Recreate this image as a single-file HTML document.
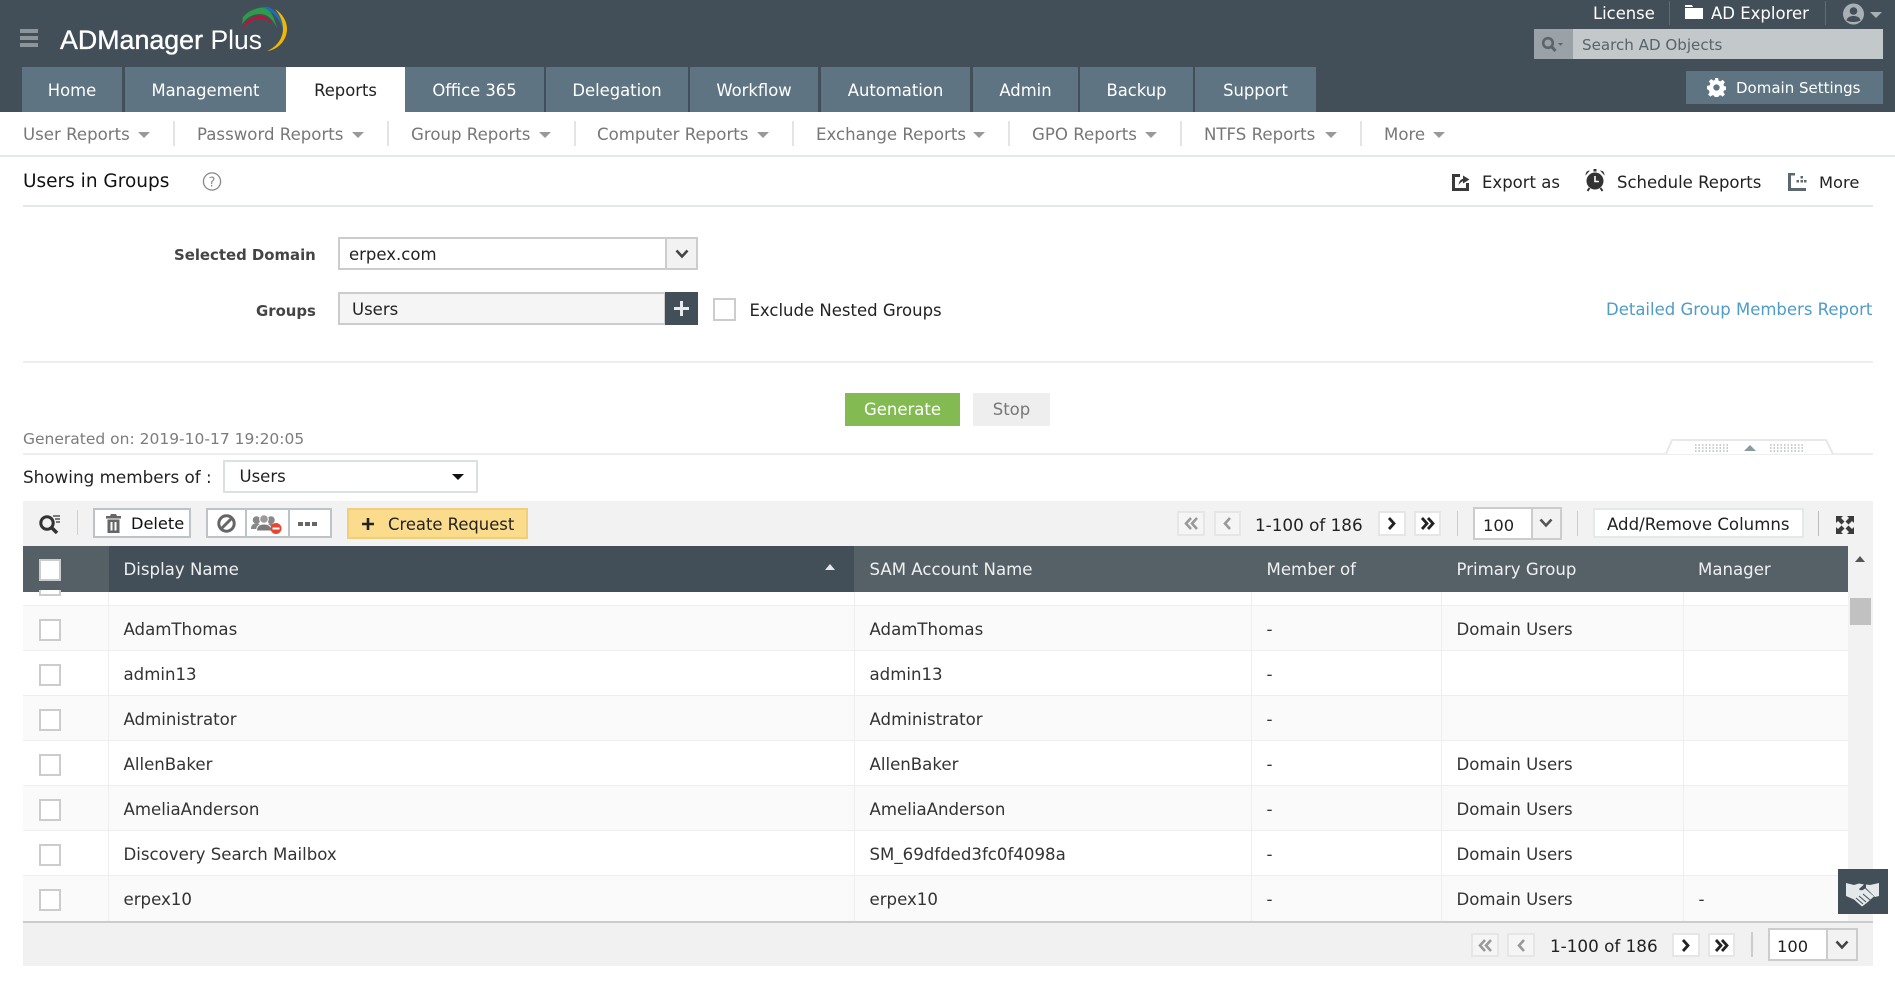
<!DOCTYPE html>
<html><head><meta charset="utf-8"><title>ADManager Plus</title>
<style>
html,body{margin:0;padding:0;width:1895px;height:981px;overflow:hidden;background:#fff}
body{position:relative;font-family:"DejaVu Sans","Liberation Sans",sans-serif;font-size:16.5px;color:#222}
.b,.t,svg{position:absolute}
.b{box-sizing:border-box}
.t{white-space:nowrap;line-height:20px;height:20px}
.d{margin-top:1px}
.tab{position:absolute;top:67px;height:45px;background:#5f7482;color:#fff;text-align:center;line-height:48px;white-space:nowrap;font-size:16.4px}
.sub{color:#777;font-size:16.6px;top:125px}
.car{position:absolute;width:0;height:0;border-left:6px solid transparent;border-right:6px solid transparent;border-top:6px solid #999;top:132px}
.sep{position:absolute;top:121px;width:2px;height:25px;background:#e4e4e4}
.hd{color:#eef0f1;top:560px;font-size:16.6px}
.c{color:#333;font-size:16.6px;margin-top:1px;margin-left:.5px}
.pg{position:absolute;box-sizing:border-box;background:#fff;border:2px solid #e6e6e6;text-align:center}
.pg.off{background:#f5f5f5}
.cb{position:absolute;box-sizing:border-box;left:39px;width:22px;height:22px;background:#fff;border:2px solid #ccc}
.col{position:absolute;top:592px;width:1px;height:329px;background:#eee}
</style></head><body>

<!-- header -->
<div class="b" style="left:0;top:0;width:1895px;height:112px;background:#434f58"></div>
<div class="b" style="left:20px;top:29px;width:18px;height:4px;background:#8d959b"></div>
<div class="b" style="left:20px;top:36px;width:18px;height:4px;background:#8d959b"></div>
<div class="b" style="left:20px;top:43px;width:18px;height:4px;background:#8d959b"></div>
<div class="t" style="left:60px;top:28px;color:#fff;font-family:'Liberation Sans',sans-serif;font-size:26.8px;line-height:24px;height:24px;-webkit-text-stroke:.35px #fff">ADManager <span style="font-size:26.500px;-webkit-text-stroke:0">Plus</span></div>
<svg style="left:220px;top:0" width="80" height="60" viewBox="0 0 80 60">
<path d="M36 9C42 6 48 6 52 9C60 14 63 22 64 32C60 20 54 12 46 10C42 9 39 9 36 9Z" fill="#1d6fb5"/>
<path d="M23 17C30 9 38 8 42 8C50 8 54 16 57 28C53 19 47 14 40 14C33 14 27 17 22 24Z" fill="#2f9a4a"/>
<path d="M22 29C26 18 36 16 41 16C46 16 50 20 52 25C48 20 44 19 40 19C34 19 28 23 22 29Z" fill="#b3173a"/>
<path d="M55 9C63 14 67 22 67 29C67 40 58 50 47 51C57 47 63 38 63 29C63 22 60 15 55 9Z" fill="#f2b705"/>
</svg>

<div class="tab" style="left:22px;width:100px">Home</div>
<div class="tab" style="left:125px;width:161px">Management</div>
<div class="tab" style="left:286px;width:119px;background:#fff;color:#222">Reports</div>
<div class="tab" style="left:405px;width:139px">Office 365</div>
<div class="tab" style="left:546px;width:142px">Delegation</div>
<div class="tab" style="left:690px;width:128px">Workflow</div>
<div class="tab" style="left:821px;width:149px">Automation</div>
<div class="tab" style="left:973px;width:105px">Admin</div>
<div class="tab" style="left:1080px;width:113px">Backup</div>
<div class="tab" style="left:1195px;width:121px">Support</div>

<div class="t" style="left:1593px;top:4px;color:#fff;font-size:16.4px">License</div>
<div class="b" style="left:1669px;top:1px;width:1px;height:24px;background:#5f6b74"></div>
<svg style="left:1684px;top:4px" width="20" height="16" viewBox="0 0 20 16"><path d="M1 1H8L9 3H1ZM1 4H19V15H1Z" fill="#fff"/></svg>
<div class="t" style="left:1711px;top:4px;color:#fff;font-size:16.5px">AD Explorer</div>
<div class="b" style="left:1825px;top:1px;width:1px;height:24px;background:#5f6b74"></div>
<svg style="left:1842px;top:3px" width="23" height="22" viewBox="0 0 23 22"><circle cx="11.500" cy="11" r="10.500" fill="#a8b0b5"/><circle cx="11.500" cy="8" r="3.800" fill="#434f58"/><path d="M4.500 17.500C5 14 8.500 13 11.500 13S18 14 18.500 17.500C15 19.500 8 19.500 4.500 17.500Z" fill="#434f58"/></svg>
<div class="b" style="left:1870px;top:12px;width:0;height:0;border-left:6px solid transparent;border-right:6px solid transparent;border-top:6px solid #a8b0b5"></div>

<div class="b" style="left:1534px;top:29px;width:39px;height:30px;background:#9aa2a8"></div>
<div class="b" style="left:1573px;top:29px;width:310px;height:30px;background:#c3c8cb"></div>
<svg style="left:1541px;top:36px" width="24" height="17" viewBox="0 0 24 17"><circle cx="7" cy="7" r="4.800" fill="none" stroke="#59646c" stroke-width="2.600"/><path d="M10.500 10.500L14.500 15" stroke="#59646c" stroke-width="3"/><path d="M17 7h5l-2.500 2.800z" fill="#59646c"/></svg>
<div class="t d" style="left:1582px;top:34px;color:#59636a;font-size:15.100px">Search AD Objects</div>

<div class="b" style="left:1686px;top:71px;width:197px;height:33px;background:#5f7482"></div>
<svg style="left:1707px;top:78px" width="19" height="19" viewBox="0 0 24 24"><path fill="#fff" fill-rule="evenodd" d="M10 0h4l.7 3.400 2.200.9 2.900-1.900 2.800 2.800-1.900 2.900.9 2.200 3.400.7v4l-3.400.7-.9 2.200 1.900 2.900-2.800 2.800-2.900-1.900-2.200.9-.7 3.400h-4l-.7-3.400-2.200-.9-2.900 1.900-2.800-2.800 1.900-2.900-.9-2.200L0 14v-4l3.400-.7.9-2.200L2.400 4.200l2.800-2.800 2.900 1.900 2.200-.9zM12 8a4 4 0 1 0 0 8 4 4 0 0 0 0-8z"/></svg>
<div class="t d" style="left:1736px;top:77px;color:#fff;font-size:15px">Domain Settings</div>

<!-- sub nav -->
<div class="t sub" style="left:23px">User Reports</div><div class="car" style="left:138px"></div><div class="sep" style="left:173px"></div>
<div class="t sub" style="left:197px">Password Reports</div><div class="car" style="left:352px"></div><div class="sep" style="left:387px"></div>
<div class="t sub" style="left:411px">Group Reports</div><div class="car" style="left:539px"></div><div class="sep" style="left:574px"></div>
<div class="t sub" style="left:597px">Computer Reports</div><div class="car" style="left:757px"></div><div class="sep" style="left:792px"></div>
<div class="t sub" style="left:816px">Exchange Reports</div><div class="car" style="left:973px"></div><div class="sep" style="left:1008px"></div>
<div class="t sub" style="left:1032px">GPO Reports</div><div class="car" style="left:1145px"></div><div class="sep" style="left:1180px"></div>
<div class="t sub" style="left:1204px">NTFS Reports</div><div class="car" style="left:1325px"></div><div class="sep" style="left:1360px"></div>
<div class="t sub" style="left:1384px">More</div><div class="car" style="left:1433px"></div>
<div class="b" style="left:0;top:155px;width:1895px;height:2px;background:#e4e8e8"></div>

<!-- title row -->
<div class="t" style="left:23px;top:171px;font-size:18.500px;color:#111;margin-top:1px">Users in Groups</div>
<svg style="left:202px;top:172px" width="20" height="20" viewBox="0 0 20 20"><circle cx="10" cy="9.500" r="8.600" fill="none" stroke="#888" stroke-width="1.300"/><text x="10" y="14.500" text-anchor="middle" font-family="DejaVu Sans" font-size="13" fill="#888">?</text></svg>

<svg style="left:1451px;top:172px" width="20" height="20" viewBox="0 0 20 20"><path d="M1 2H9V5H4V16H15V11H18V19H1Z" fill="#3a3a3a"/><path d="M7.500 13C8 9.500 9.500 7.500 12 6.800V3.500L18.500 7.500L12 11.500V9.300C10.500 9.800 9 11 7.500 13Z" fill="#3a3a3a"/></svg>
<div class="t d" style="left:1482px;top:172px;font-size:16.500px">Export as</div>
<svg style="left:1584px;top:168px" width="22" height="24" viewBox="0 0 22 24"><circle cx="11" cy="13" r="8.500" fill="#333"/><path d="M1.500 7.500C1.500 4.500 3 2.500 6 2.500ZM20.500 7.500C20.500 4.500 19 2.500 16 2.500Z" fill="#333"/><rect x="9.500" y="1" width="3" height="2.500" fill="#333"/><path d="M5.500 20L3.500 23M16.500 20L18.500 23" stroke="#333" stroke-width="2"/><path d="M11 8V13.500H15" fill="none" stroke="#fff" stroke-width="1.600"/></svg>
<div class="t d" style="left:1617px;top:172px;font-size:16.500px">Schedule Reports</div>
<svg style="left:1787px;top:172px" width="20" height="20" viewBox="0 0 20 20"><path d="M1 1H8V3.500H4V16H19V19H1Z" fill="#5c6870"/><path d="M9.500 8h2.500v2.500H9.500zM13.500 8h2.500v2.500h-2.500zM17 8h2.500v2.500H17zM13.500 4h2.500v2.500h-2.500z" fill="#5c6870"/></svg>
<div class="t d" style="left:1819px;top:172px;font-size:16.300px">More</div>
<div class="b" style="left:23px;top:205px;width:1850px;height:2px;background:#e4e8e8"></div>

<!-- form -->
<div class="t" style="left:174px;top:245px;font-weight:bold;font-size:14.900px;color:#444">Selected Domain</div>
<div class="b" style="left:338px;top:237px;width:360px;height:33px;background:#fff;border:2px solid #ccc"></div>
<div class="b" style="left:665px;top:237px;width:33px;height:33px;background:#f2f2f2;border:2px solid #ccc"></div>
<svg style="left:675px;top:249px" width="14" height="10" viewBox="0 0 14 10"><path d="M1.500 1.500L7 7.500L12.500 1.500" fill="none" stroke="#444" stroke-width="2.600"/></svg>
<div class="t d" style="left:349px;top:244px;font-size:16.500px">erpex.com</div>

<div class="t" style="left:256px;top:301px;font-weight:bold;font-size:14.900px;color:#444">Groups</div>
<div class="b" style="left:338px;top:292px;width:328px;height:33px;background:#f5f5f5;border:2px solid #ccc"></div>
<div class="b" style="left:665px;top:292px;width:33px;height:33px;background:#434f58"></div>
<svg style="left:674px;top:301px" width="15" height="15" viewBox="0 0 15 15"><path d="M6 0h3v6h6v3H9v6H6V9H0V6h6z" fill="#e8ecee"/></svg>
<div class="t d" style="left:352px;top:299px;font-size:16.500px">Users</div>

<div class="b" style="left:713px;top:298px;width:23px;height:23px;background:#fff;border:2px solid #ccc"></div>
<div class="t" style="left:749.500px;top:300px;font-size:16.500px;margin-top:.5px">Exclude Nested Groups</div>
<div class="t d" style="left:1606px;top:299px;font-size:16.500px;color:#4f9cc8">Detailed Group Members Report</div>
<div class="b" style="left:23px;top:361px;width:1850px;height:2px;background:#eee"></div>

<div class="b" style="left:845px;top:393px;width:115px;height:33px;background:#83bb52;color:#fff;text-align:center;line-height:34px;font-size:16.500px">Generate</div>
<div class="b" style="left:973px;top:393px;width:77px;height:33px;background:#eee;color:#777;text-align:center;line-height:34px;font-size:16.500px">Stop</div>

<div class="t" style="left:23px;top:429px;color:#7c7c7c;font-size:15.500px">Generated on: 2019-10-17 19:20:05</div>
<div class="b" style="left:23px;top:453px;width:1850px;height:2px;background:#eee"></div>
<svg style="left:1664px;top:438px" width="172" height="18" viewBox="0 0 172 18"><path d="M2 16L8 2H162L169 16" fill="#fff" stroke="#e8e8e8" stroke-width="2"/><path d="M80 13L86 7L92 13Z" fill="#8a9aa3"/><path d="M31 7H66M31 10H66M31 13H66M106 7H141M106 10H141M106 13H141" stroke="#b8bec2" stroke-width="1.500" stroke-dasharray="1.500 2"/></svg>

<div class="t" style="left:23px;top:467px;font-size:16.800px;color:#222">Showing members of :</div>
<div class="b" style="left:223px;top:460px;width:255px;height:33px;background:#fff;border:2px solid #dde0e0"></div>
<div class="t" style="left:239.500px;top:467px;font-size:16.500px">Users</div>
<div class="b" style="left:452px;top:474px;width:0;height:0;border-left:6px solid transparent;border-right:6px solid transparent;border-top:6px solid #111"></div>

<!-- toolbar -->
<div class="b" style="left:23px;top:501px;width:1850px;height:45px;background:#f2f2f2"></div>
<svg style="left:38px;top:514px" width="24" height="20" viewBox="0 0 24 20"><circle cx="9" cy="9" r="6.200" fill="none" stroke="#333" stroke-width="3"/><path d="M13.500 13.500L19 19" stroke="#333" stroke-width="3.500"/><path d="M15 2h7M17 5h5M18 8h4" stroke="#333" stroke-width="1.300"/></svg>
<div class="b" style="left:77px;top:510px;width:1px;height:25px;background:#d0d0d0"></div>

<div class="b" style="left:93px;top:508px;width:98px;height:30px;background:#fff;border:2px solid #bcc3c9"></div>
<svg style="left:106px;top:514px" width="15" height="19" viewBox="0 0 15 19"><path d="M5 0H10L11 2H15V4.500H0V2H4ZM1.500 5.500H13.500V19H1.500ZM4.500 8V16.500H6.500V8ZM8.500 8V16.500H10.500V8Z" fill="#666" fill-rule="evenodd"/></svg>
<div class="t" style="left:131px;top:514px;font-size:16.200px;color:#111">Delete</div>

<div class="b" style="left:206px;top:508px;width:126px;height:30px;background:#fff;border:2px solid #bcc3c9"></div>
<div class="b" style="left:245px;top:508px;width:2px;height:30px;background:#bcc3c9"></div>
<div class="b" style="left:288px;top:508px;width:2px;height:30px;background:#bcc3c9"></div>
<svg style="left:217px;top:514px" width="19" height="19" viewBox="0 0 19 19"><circle cx="9.500" cy="9.500" r="7.700" fill="none" stroke="#666" stroke-width="3"/><path d="M14.500 4.500L4.500 14.500" stroke="#666" stroke-width="3"/></svg>
<svg style="left:250px;top:513px" width="33" height="22" viewBox="0 0 33 22"><circle cx="6.500" cy="7" r="3.800" fill="#888"/><path d="M1 16C1 11.500 3.500 10.500 6.500 10.500S12 11.500 12 16Z" fill="#888"/><circle cx="21" cy="7" r="3.800" fill="#888"/><path d="M15 16C15 11.500 18 10.500 21 10.500S27 11.500 27 16Z" fill="#888"/><circle cx="14" cy="6" r="4.300" fill="#9a9a9a" stroke="#fff"/><path d="M6.500 18C6.500 12.500 10 11 14 11S21.500 12.500 21.500 18Z" fill="#7a7a7a" stroke="#fff"/><circle cx="26" cy="15.500" r="5.500" fill="#e8452e"/><path d="M22.500 14.500H29.500V16.500H22.500Z" fill="#fff"/></svg>
<div class="b" style="left:298px;top:522px;width:5px;height:4px;background:#666"></div>
<div class="b" style="left:305px;top:522px;width:5px;height:4px;background:#666"></div>
<div class="b" style="left:312px;top:522px;width:5px;height:4px;background:#666"></div>

<div class="b" style="left:347px;top:508px;width:181px;height:31px;background:#fbdc8c;border:2px solid #f0cf7a"></div>
<svg style="left:362px;top:518px" width="12" height="12" viewBox="0 0 12 12"><path d="M4.700 0h2.600v4.700H12v2.600H7.300V12H4.700V7.300H0V4.700h4.700z" fill="#222"/></svg>
<div class="t d" style="left:388px;top:514px;font-size:16.400px;color:#222">Create Request</div>

<!-- top pagination -->
<div class="pg off" style="left:1177px;top:511px;width:28px;height:25px"></div>
<svg style="left:1184px;top:517px" width="15" height="13" viewBox="0 0 15 13"><path d="M7 1L2 6.500L7 12M13 1L8 6.500L13 12" fill="none" stroke="#999" stroke-width="2.600"/></svg>
<div class="pg off" style="left:1214px;top:511px;width:27px;height:25px"></div>
<svg style="left:1223px;top:517px" width="9" height="13" viewBox="0 0 9 13"><path d="M7 1L2 6.500L7 12" fill="none" stroke="#999" stroke-width="2.600"/></svg>
<div class="t d" style="left:1255px;top:514px;font-size:16.800px;color:#222">1-100 of 186</div>
<div class="pg" style="left:1378px;top:511px;width:28px;height:25px"></div>
<svg style="left:1387px;top:517px" width="9" height="13" viewBox="0 0 9 13"><path d="M2 1L7 6.500L2 12" fill="none" stroke="#222" stroke-width="2.800"/></svg>
<div class="pg" style="left:1414px;top:511px;width:27px;height:25px"></div>
<svg style="left:1420px;top:517px" width="15" height="13" viewBox="0 0 15 13"><path d="M2 1L7 6.500L2 12M8 1L13 6.500L8 12" fill="none" stroke="#222" stroke-width="2.800"/></svg>
<div class="b" style="left:1457px;top:511px;width:1px;height:25px;background:#ccc"></div>
<div class="b" style="left:1473px;top:507px;width:89px;height:33px;background:#fff;border:2px solid #ccc"></div>
<div class="b" style="left:1531px;top:507px;width:31px;height:33px;background:#f2f2f2;border:2px solid #ccc"></div>
<svg style="left:1539px;top:518px" width="14" height="10" viewBox="0 0 14 10"><path d="M1.500 1.500L7 7.500L12.500 1.500" fill="none" stroke="#555" stroke-width="2.600"/></svg>
<div class="t" style="left:1483px;top:516px;font-size:16.300px;color:#222">100</div>
<div class="b" style="left:1577px;top:511px;width:1px;height:25px;background:#ccc"></div>
<div class="b" style="left:1593px;top:508px;width:211px;height:30px;background:#fff;border:2px solid #e4e8e8"></div>
<div class="t d" style="left:1607px;top:514px;font-size:16.600px;color:#222">Add/Remove Columns</div>
<div class="b" style="left:1818px;top:511px;width:1px;height:25px;background:#bbb"></div>
<svg style="left:1836px;top:516px" width="18" height="18" viewBox="0 0 18 18"><path d="M0 0H7L5 2L8.500 5.500L5.500 8.500L2 5L0 7ZM18 0V7L16 5L12.500 8.500L9.500 5.500L13 2L11 0ZM0 18V11L2 13L5.500 9.500L8.500 12.500L5 16L7 18ZM18 18H11L13 16L9.500 12.500L12.500 9.500L16 13L18 11Z" fill="#3a3a3a"/></svg>

<!-- table -->
<div class="b" style="left:23px;top:546px;width:86px;height:46px;background:#555f66"></div>
<div class="b" style="left:109px;top:546px;width:745px;height:46px;background:#434f58"></div>
<div class="b" style="left:854px;top:546px;width:994px;height:46px;background:#566067"></div>
<div class="b" style="left:1848px;top:546px;width:25px;height:377px;background:#f2f2f2"></div>
<div class="b" style="left:39px;top:559px;width:22px;height:22px;background:#fff;border:2px solid #ccc"></div>
<div class="t hd" style="left:123.500px">Display Name</div>
<div class="b" style="left:825px;top:564px;width:0;height:0;border-left:5px solid transparent;border-right:5px solid transparent;border-bottom:6px solid #e8e8e8"></div>
<div class="t hd" style="left:869.500px">SAM Account Name</div>
<div class="t hd" style="left:1266.500px">Member of</div>
<div class="t hd" style="left:1456.500px">Primary Group</div>
<div class="t hd" style="left:1698px">Manager</div>
<div class="b" style="left:1855px;top:556px;width:0;height:0;border-left:5px solid transparent;border-right:5px solid transparent;border-bottom:6px solid #555"></div>
<div class="b" style="left:1850px;top:598px;width:21px;height:27px;background:#c1c1c1"></div>

<div class="b" style="left:23px;top:592px;width:1825px;height:13px;background:#fff;overflow:hidden"></div>
<div class="b" style="left:39px;top:590px;width:22px;height:6px;background:#fff;border:2px solid #ccc;border-top:0"></div>
<div class="b" style="left:23px;top:605px;width:1825px;height:46px;background:#fafafa;border-top:1px solid #eee;border-bottom:1px solid #eee"></div>
<div class="b" style="left:23px;top:651px;width:1825px;height:45px;background:#fff;border-bottom:1px solid #eee"></div>
<div class="b" style="left:23px;top:696px;width:1825px;height:45px;background:#fafafa;border-bottom:1px solid #eee"></div>
<div class="b" style="left:23px;top:741px;width:1825px;height:45px;background:#fff;border-bottom:1px solid #eee"></div>
<div class="b" style="left:23px;top:786px;width:1825px;height:45px;background:#fafafa;border-bottom:1px solid #eee"></div>
<div class="b" style="left:23px;top:831px;width:1825px;height:45px;background:#fff;border-bottom:1px solid #eee"></div>
<div class="b" style="left:23px;top:876px;width:1825px;height:45px;background:#fafafa"></div>
<div class="col" style="left:108px"></div><div class="col" style="left:854px"></div><div class="col" style="left:1251px"></div><div class="col" style="left:1441px"></div><div class="col" style="left:1683px"></div>

<div class="cb" style="top:619px"></div>
<div class="t c" style="left:123px;top:619px">AdamThomas</div><div class="t c" style="left:869px;top:619px">AdamThomas</div><div class="t c" style="left:1266px;top:619px">-</div><div class="t c" style="left:1456px;top:619px">Domain Users</div>
<div class="cb" style="top:664px"></div>
<div class="t c" style="left:123px;top:664px">admin13</div><div class="t c" style="left:869px;top:664px">admin13</div><div class="t c" style="left:1266px;top:664px">-</div>
<div class="cb" style="top:709px"></div>
<div class="t c" style="left:123px;top:709px">Administrator</div><div class="t c" style="left:869px;top:709px">Administrator</div><div class="t c" style="left:1266px;top:709px">-</div>
<div class="cb" style="top:754px"></div>
<div class="t c" style="left:123px;top:754px">AllenBaker</div><div class="t c" style="left:869px;top:754px">AllenBaker</div><div class="t c" style="left:1266px;top:754px">-</div><div class="t c" style="left:1456px;top:754px">Domain Users</div>
<div class="cb" style="top:799px"></div>
<div class="t c" style="left:123px;top:799px">AmeliaAnderson</div><div class="t c" style="left:869px;top:799px">AmeliaAnderson</div><div class="t c" style="left:1266px;top:799px">-</div><div class="t c" style="left:1456px;top:799px">Domain Users</div>
<div class="cb" style="top:844px"></div>
<div class="t c" style="left:123px;top:844px">Discovery Search Mailbox</div><div class="t c" style="left:869px;top:844px">SM_69dfded3fc0f4098a</div><div class="t c" style="left:1266px;top:844px">-</div><div class="t c" style="left:1456px;top:844px">Domain Users</div>
<div class="cb" style="top:889px"></div>
<div class="t c" style="left:123px;top:889px">erpex10</div><div class="t c" style="left:869px;top:889px">erpex10</div><div class="t c" style="left:1266px;top:889px">-</div><div class="t c" style="left:1456px;top:889px">Domain Users</div><div class="t c" style="left:1698px;top:889px">-</div>

<!-- bottom bar -->
<div class="b" style="left:23px;top:921px;width:1850px;height:45px;background:#f1f1f1;border-top:2px solid #ccc"></div>
<div class="pg off" style="left:1471px;top:933px;width:28px;height:24px"></div>
<svg style="left:1478px;top:939px" width="15" height="13" viewBox="0 0 15 13"><path d="M7 1L2 6.500L7 12M13 1L8 6.500L13 12" fill="none" stroke="#999" stroke-width="2.600"/></svg>
<div class="pg off" style="left:1507px;top:933px;width:28px;height:24px"></div>
<svg style="left:1517px;top:939px" width="9" height="13" viewBox="0 0 9 13"><path d="M7 1L2 6.500L7 12" fill="none" stroke="#999" stroke-width="2.600"/></svg>
<div class="t" style="left:1550px;top:936px;font-size:16.800px;color:#222">1-100 of 186</div>
<div class="pg" style="left:1672px;top:933px;width:28px;height:24px"></div>
<svg style="left:1681px;top:939px" width="9" height="13" viewBox="0 0 9 13"><path d="M2 1L7 6.500L2 12" fill="none" stroke="#222" stroke-width="2.800"/></svg>
<div class="pg" style="left:1708px;top:933px;width:27px;height:24px"></div>
<svg style="left:1714px;top:939px" width="15" height="13" viewBox="0 0 15 13"><path d="M2 1L7 6.500L2 12M8 1L13 6.500L8 12" fill="none" stroke="#222" stroke-width="2.800"/></svg>
<div class="b" style="left:1751px;top:932px;width:2px;height:25px;background:#ccc"></div>
<div class="b" style="left:1768px;top:928px;width:90px;height:33px;background:#fff;border:2px solid #ccc"></div>
<div class="b" style="left:1826px;top:928px;width:32px;height:33px;background:#f2f2f2;border:2px solid #ccc"></div>
<svg style="left:1835px;top:940px" width="14" height="10" viewBox="0 0 14 10"><path d="M1.500 1.500L7 7.500L12.500 1.500" fill="none" stroke="#444" stroke-width="2.600"/></svg>
<div class="t" style="left:1777px;top:937px;font-size:16.300px;color:#222">100</div>

<!-- handshake -->
<div class="b" style="left:1838px;top:869px;width:50px;height:45px;background:#434f58"></div>
<svg style="left:1846px;top:882px" width="33" height="25" viewBox="0 0 33 25"><path d="M0 1L8 3L13 1.500L18 2.500L13 7C14 9 17 8.500 19 6.500L28 14.500L25 17L23 19L20 21.500L16 24.500L8 17.500L0 14Z" fill="#e4e8ea"/><path d="M20 2.500L24 3L33 1V14L29 15L20 6Z" fill="#e4e8ea"/><path d="M13 14L20 20M10 16L17 22M17 12L24 18" stroke="#434f58" stroke-width="1"/></svg>

</body></html>
